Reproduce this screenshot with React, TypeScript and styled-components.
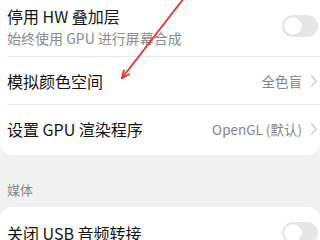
import React from "react";
import styled, { createGlobalStyle } from "styled-components";

const Global = createGlobalStyle`
  html, body { margin: 0; padding: 0; background: #f1f1f1; overflow: hidden; }
  body { width: 320px; height: 240px; font-family: "Noto Sans CJK SC", "Noto Sans", sans-serif; }
`;

const Page = styled.div`
  position: relative;
  width: 320px;
  height: 240px;
  overflow: hidden;
  background: #f1f1f1;
`;

const Card = styled.div<{ $top?: boolean; $bottom?: boolean }>`
  background: #ffffff;
  border-radius: ${(p) => (p.$top ? "12px 12px" : "0 0")} ${(p) => (p.$bottom ? "12px 12px" : "0 0")};
  margin-top: ${(p) => (p.$top ? "0" : "-5px")};
  padding: ${(p) => (p.$top ? "2px" : "0")} 0 ${(p) => (p.$bottom ? "2px" : "0")} 0;
`;

const Row = styled.div<{ $divider?: boolean; $tall?: boolean }>`
  display: flex;
  align-items: center;
  justify-content: space-between;
  min-height: 48px;
  box-sizing: border-box;
  padding: ${(p) => (p.$tall ? "10px" : "0")} 2px ${(p) => (p.$tall ? "10px" : "0")} 7px;
  position: relative;
  ${(p) =>
    p.$divider
      ? `&::after { content: ""; position: absolute; left: 7px; right: 0; bottom: 0; height: 1px; background: #e8e8e8; }`
      : ""}
`;

const TextCol = styled.div`
  display: flex;
  flex-direction: column;
  gap: 2px;
`;

const Title = styled.div`
  font-size: 16px;
  line-height: 22px;
  color: #141414;
  white-space: nowrap;
`;

const Sub = styled.div`
  font-size: 14px;
  line-height: 18px;
  color: #8c8c8c;
  white-space: nowrap;
`;

const Value = styled.div`
  display: flex;
  align-items: center;
  gap: 9px;
  font-size: 13.5px;
  color: #858585;
  padding-right: 1px;
  white-space: nowrap;
`;

const Toggle = styled.div`
  width: 36px;
  height: 22px;
  border-radius: 11px;
  background: #e6e6e6;
  position: relative;
  flex-shrink: 0;
  &::before {
    content: "";
    position: absolute;
    left: 2px;
    top: 2px;
    width: 18px;
    height: 18px;
    border-radius: 50%;
    background: #ffffff;
    box-shadow: 0 0 1px rgba(0, 0, 0, 0.15);
  }
`;

const SectionHeader = styled.div`
  padding: 26px 7px 8px;
  font-size: 13px;
  line-height: 18px;
  color: #8a8a8a;
`;

const Overlay = styled.svg`
  position: absolute;
  left: 0;
  top: 0;
  pointer-events: none;
`;

const Chevron = () => (
  <svg width="6" height="12" viewBox="0 0 6 12">
    <path d="M0.6 0.8 L5.2 6 L0.6 11.2" fill="none" stroke="#bdbdbd" strokeWidth="1.1" strokeLinecap="round" strokeLinejoin="round" />
  </svg>
);

export default function App() {
  return (
    <Page>
      <Global />
      <Card $bottom>
        <Row $tall $divider>
          <TextCol>
            <Title>停用 HW 叠加层</Title>
            <Sub>始终使用 GPU 进行屏幕合成</Sub>
          </TextCol>
          <Toggle />
        </Row>
        <Row $divider>
          <Title>模拟颜色空间</Title>
          <Value>
            全色盲
            <Chevron />
          </Value>
        </Row>
        <Row>
          <Title>设置 GPU 渲染程序</Title>
          <Value>
            OpenGL (默认)
            <Chevron />
          </Value>
        </Row>
      </Card>
      <SectionHeader>媒体</SectionHeader>
      <Card $top>
        <Row>
          <Title>关闭 USB 音频转接</Title>
          <Toggle />
        </Row>
      </Card>
      <Overlay width="320" height="240" viewBox="0 0 320 240">
        <g stroke="#e8322e" strokeWidth="1.8" strokeLinecap="round" fill="none">
          <line x1="184" y1="-2" x2="122" y2="78" />
          <line x1="122" y1="78" x2="129" y2="74.5" />
          <line x1="122" y1="78" x2="123.8" y2="70.5" />
        </g>
      </Overlay>
    </Page>
  );
}
